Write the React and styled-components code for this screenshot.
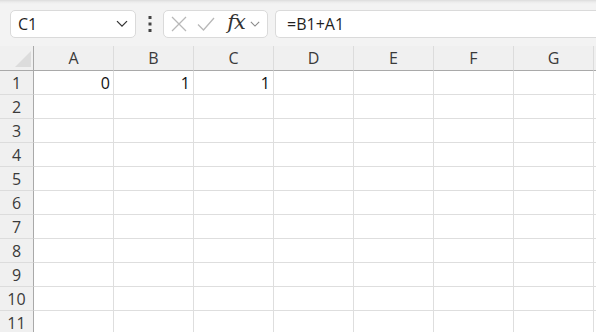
import React from "react";
import styled, { createGlobalStyle } from "styled-components";

const GlobalStyles = createGlobalStyle`
  html, body {
    margin: 0;
    padding: 0;
    background: #f3f3f3;
    overflow: hidden;
  }
  body {
    font-family: "Open Sans", "Noto Sans", "Liberation Sans", sans-serif;
    color: #1f1f1f;
  }
`

const Sheet = styled.div`
  width: 596px;
  height: 332px;
  display: flex;
  flex-direction: column;
  overflow: hidden;
  background: #f3f3f3;
`

const Toolbar = styled.div`
  height: 46px;
  flex: 0 0 46px;
  display: flex;
  align-items: flex-start;
  padding: 10px 0 0 10px;
  box-sizing: border-box;
  background: linear-gradient(#dcdcdc 0px, #ececec 2px, #f3f3f3 4px);
`

const Box = styled.div`
  height: 28px;
  box-sizing: border-box;
  border: 1px solid #dadada;
  border-radius: 5px;
  background: #fff;
  display: flex;
  align-items: center;
`

const NameBox = styled(Box)`
  width: 126px;
  padding: 0 7px 0 7px;
  justify-content: space-between;
  font-size: 16px;
`

const Dots = styled.div`
  width: 27px;
  height: 28px;
  display: flex;
  align-items: center;
  justify-content: center;
`

const FxBox = styled(Box)`
  width: 105px;
  padding: 0 0 0 6px;
`

const IconSlot = styled.div`
  width: ${p => p.w}px;
  display: flex;
  align-items: center;
  justify-content: center;
`

const Fx = styled.span`
  font-family: "DejaVu Serif", "Liberation Serif", serif;
  font-style: italic;
  font-size: 21px;
  color: #333;
  letter-spacing: -1px;
  line-height: 1;
  margin-top: -3px;
`

const FormulaBox = styled(Box)`
  flex: 1;
  margin-left: 7px;
  border-right: none;
  border-radius: 5px 0 0 5px;
  padding-left: 11px;
  font-size: 16px;
`

const Grid = styled.div`
  display: grid;
  grid-template-columns: 34px repeat(7, 80px) 1fr;
  grid-template-rows: 25px;
  grid-auto-rows: 24px;
  flex: 1;
  background: #fff;
`

const Corner = styled.div`
  background: #f0f0f0;
  border-right: 1px solid #a9a9a9;
  border-bottom: 1px solid #a9a9a9;
  position: relative;
  box-sizing: border-box;
  &::after {
    content: "";
    position: absolute;
    right: 2px;
    bottom: 3px;
    width: 0;
    height: 0;
    border-left: 16px solid transparent;
    border-bottom: 16px solid #dcdcdc;
  }
`

const ColHead = styled.div`
  background: #f0f0f0;
  border-right: 1px solid #dcdcdc;
  border-bottom: 1px solid #a9a9a9;
  box-sizing: border-box;
  display: flex;
  align-items: center;
  justify-content: center;
  font-size: 16px;
  color: #3a3a3a;
`

const RowHead = styled.div`
  background: #f0f0f0;
  border-right: 1px solid #a9a9a9;
  border-bottom: 1px solid #dcdcdc;
  box-sizing: border-box;
  display: flex;
  align-items: center;
  justify-content: center;
  font-size: 16px;
  color: #3a3a3a;
`

const Cell = styled.div`
  border-right: 1px solid #dedede;
  border-bottom: 1px solid #dedede;
  box-sizing: border-box;
  display: flex;
  align-items: center;
  justify-content: ${p => (p.num ? "flex-end" : "flex-start")};
  padding: 0 3px;
  font-size: 16px;
  color: #111;
`

const cols = ["A", "B", "C", "D", "E", "F", "G", ""]
const data = { "1-A": 0, "1-B": 1, "1-C": 1 }

function Chevron({ size = 12, color = "#444" }) {
  return (
    <svg width={size} height={size * 0.6} viewBox="0 0 12 7" fill="none">
      <path d="M1 1l5 5 5-5" stroke={color} strokeWidth="1.3" />
    </svg>
  )
}

function App() {
  const rows = Array.from({ length: 11 }, (_, i) => i + 1)

  return (
    <Sheet>
      <GlobalStyles />
      <Toolbar>
        <NameBox>
          <span>C1</span>
          <Chevron size={12} color="#333" />
        </NameBox>
        <Dots>
          <svg width="4" height="16" viewBox="0 0 4 16">
            <rect x="0.5" y="0" width="3" height="3" fill="#444" />
            <rect x="0.5" y="6.5" width="3" height="3" fill="#444" />
            <rect x="0.5" y="13" width="3" height="3" fill="#444" />
          </svg>
        </Dots>
        <FxBox>
          <IconSlot w={18}>
            <svg width="16" height="16" viewBox="0 0 16 16">
              <path d="M1 1l14 14M15 1L1 15" stroke="#b8b8b8" strokeWidth="1.3" />
            </svg>
          </IconSlot>
          <IconSlot w={36}>
            <svg width="18" height="14" viewBox="0 0 18 14">
              <path d="M1 7.5l5.5 5.5L17 1" stroke="#b8b8b8" strokeWidth="1.3" fill="none" />
            </svg>
          </IconSlot>
          <IconSlot w={24}>
            <Fx>fx</Fx>
          </IconSlot>
          <IconSlot w={14}>
            <Chevron size={10} color="#888" />
          </IconSlot>
        </FxBox>
        <FormulaBox>=B1+A1</FormulaBox>
      </Toolbar>
      <Grid>
        <Corner />
        {cols.map((c, i) => (
          <ColHead key={i}>{c}</ColHead>
        ))}
        {rows.map(r => (
          <React.Fragment key={r}>
            <RowHead>{r}</RowHead>
            {cols.map((c, i) => {
              const v = data[`${r}-${c}`]
              return (
                <Cell key={i} num={v !== undefined}>
                  {v}
                </Cell>
              )
            })}
          </React.Fragment>
        ))}
      </Grid>
    </Sheet>
  );
}

export default App;
